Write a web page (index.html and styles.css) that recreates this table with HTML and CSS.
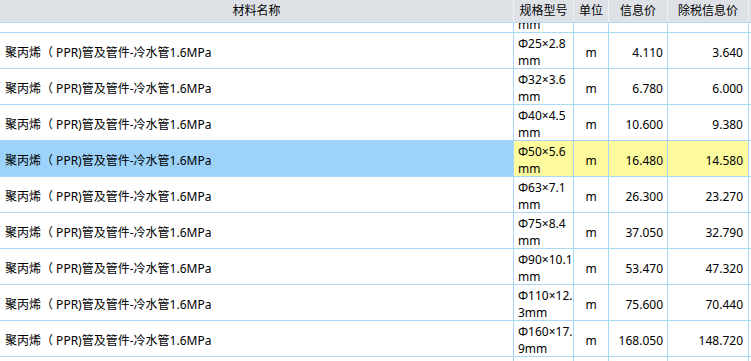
FILE: index.html
```html
<!DOCTYPE html>
<html lang="zh">
<head>
<meta charset="utf-8">
<link rel="stylesheet" href="styles.css">
</head>
<body>
<div class="grid">
  <div class="head row">
    <div class="c name">材料名称</div>
    <div class="c spec">规格型号</div>
    <div class="c unit">单位</div>
    <div class="c price">信息价</div>
    <div class="c tax">除税信息价</div>
    <div class="c end"></div>
  </div>
  <div class="body">
    <div class="row partial">
      <div class="c name"></div>
      <div class="c spec">mm</div>
      <div class="c unit"></div>
      <div class="c price"></div>
      <div class="c tax"></div>
      <div class="c end"></div>
    </div>
    <div class="row">
      <div class="c name">聚丙烯（ PPR)管及管件-冷水管1.6MPa</div>
      <div class="c spec">Φ25×2.8<br>mm</div>
      <div class="c unit">m</div>
      <div class="c price">4.110</div>
      <div class="c tax">3.640</div>
      <div class="c end"></div>
    </div>
    <div class="row">
      <div class="c name">聚丙烯（ PPR)管及管件-冷水管1.6MPa</div>
      <div class="c spec">Φ32×3.6<br>mm</div>
      <div class="c unit">m</div>
      <div class="c price">6.780</div>
      <div class="c tax">6.000</div>
      <div class="c end"></div>
    </div>
    <div class="row">
      <div class="c name">聚丙烯（ PPR)管及管件-冷水管1.6MPa</div>
      <div class="c spec">Φ40×4.5<br>mm</div>
      <div class="c unit">m</div>
      <div class="c price">10.600</div>
      <div class="c tax">9.380</div>
      <div class="c end"></div>
    </div>
    <div class="row sel">
      <div class="c name">聚丙烯（ PPR)管及管件-冷水管1.6MPa</div>
      <div class="c spec">Φ50×5.6<br>mm</div>
      <div class="c unit">m</div>
      <div class="c price">16.480</div>
      <div class="c tax">14.580</div>
      <div class="c end"></div>
    </div>
    <div class="row">
      <div class="c name">聚丙烯（ PPR)管及管件-冷水管1.6MPa</div>
      <div class="c spec">Φ63×7.1<br>mm</div>
      <div class="c unit">m</div>
      <div class="c price">26.300</div>
      <div class="c tax">23.270</div>
      <div class="c end"></div>
    </div>
    <div class="row">
      <div class="c name">聚丙烯（ PPR)管及管件-冷水管1.6MPa</div>
      <div class="c spec">Φ75×8.4<br>mm</div>
      <div class="c unit">m</div>
      <div class="c price">37.050</div>
      <div class="c tax">32.790</div>
      <div class="c end"></div>
    </div>
    <div class="row">
      <div class="c name">聚丙烯（ PPR)管及管件-冷水管1.6MPa</div>
      <div class="c spec">Φ90×10.1<br>mm</div>
      <div class="c unit">m</div>
      <div class="c price">53.470</div>
      <div class="c tax">47.320</div>
      <div class="c end"></div>
    </div>
    <div class="row">
      <div class="c name">聚丙烯（ PPR)管及管件-冷水管1.6MPa</div>
      <div class="c spec">Φ110×12.<br>3mm</div>
      <div class="c unit">m</div>
      <div class="c price">75.600</div>
      <div class="c tax">70.440</div>
      <div class="c end"></div>
    </div>
    <div class="row">
      <div class="c name">聚丙烯（ PPR)管及管件-冷水管1.6MPa</div>
      <div class="c spec">Φ160×17.<br>9mm</div>
      <div class="c unit">m</div>
      <div class="c price">168.050</div>
      <div class="c tax">148.720</div>
      <div class="c end"></div>
    </div>
    <div class="row tail">
      <div class="c name"></div>
      <div class="c spec"></div>
      <div class="c unit"></div>
      <div class="c price"></div>
      <div class="c tax"></div>
      <div class="c end"></div>
    </div>
  </div>
</div>
</body>
</html>
```
FILE: styles.css
```css
html, body {
  margin: 0;
  padding: 0;
  background: #ffffff;
}
body {
  width: 751px;
  height: 361px;
  overflow: hidden;
  font-family: "Noto Sans", "Noto Sans CJK SC", sans-serif;
  font-size: 12px;
  color: #000000;
}
.grid {
  width: 751px;
  height: 361px;
  overflow: hidden;
  display: flex;
  flex-direction: column;
}
.row {
  display: grid;
  grid-template-columns: 514px 60px 35px 59px 81px 2px;
}
.head {
  height: 22px;
  background: #dee2e7;
  border-bottom: 1px solid #b9d7ef;
  flex: none;
}
.head .c {
  display: flex;
  align-items: center;
  justify-content: center;
  border-right: 1px solid #eef0f3;
  line-height: 22px;
  font-size: 12px;
}
.head .c.end { border-right: none; }
.body {
  flex: 1;
  overflow: hidden;
}
.body .row {
  height: 35px;
  border-bottom: 1px solid #a9d8f7;
}
.body .c {
  border-right: 1px solid #a9d8f7;
  display: flex;
  align-items: center;
  line-height: 17px;
  padding-top: 3px;
  white-space: nowrap;
  overflow: hidden;
}
.body .c.end { border-right: none; }
.body .name { padding-left: 5px; }
.body .spec { padding-left: 4px; }
.body .unit { justify-content: center; }
.body .price { justify-content: flex-end; padding-right: 4px; }
.body .tax { justify-content: flex-end; padding-right: 5px; }
.body .partial { height: 9px; }
.body .partial .c {
  padding-top: 0;
  align-items: flex-end;
  line-height: 14px;
}
.body .tail { height: 20px; border-bottom: none; }
.sel .name { background: #9dd3fa; }
.sel .spec, .sel .unit, .sel .price, .sel .tax { background: #fdfb9e; }
```
